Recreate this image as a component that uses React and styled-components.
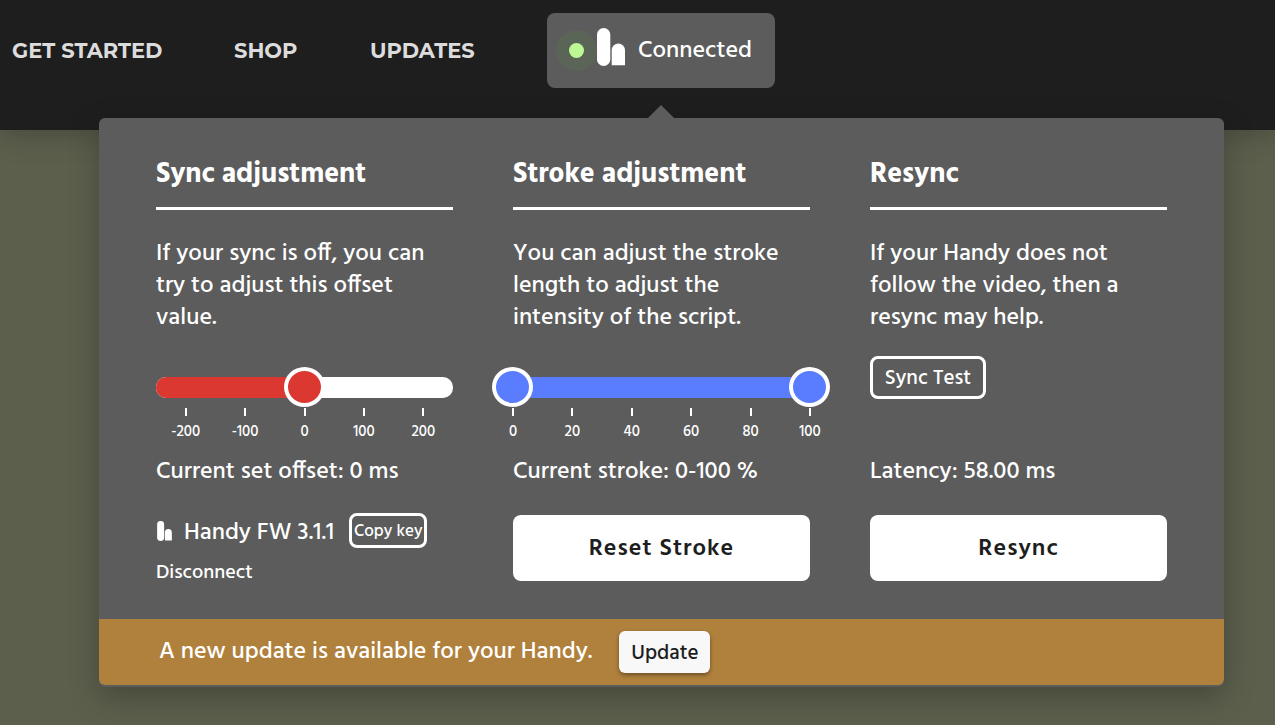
import React, { useState } from "react"
import styled, { createGlobalStyle } from "styled-components"

const Logo = ({ width, height }) => (
    <svg width={width} height={height} viewBox="0 0 28 38" fill="#fff" aria-hidden="true">
        <rect x="0" y="0" width="13.3" height="38" rx="6.6" />
        <path d="M14.7 37.2 V22.2 A6.65 6.8 0 0 1 28 22.2 V37.2 Z" />
    </svg>
)

const Slider = ({ min, max, values, names, color, rail, ticks, wide, onChange }) => {
    const percent = (v) => ((v - min) / (max - min)) * 100
    const from = values.length > 1 ? percent(values[0]) : 0
    const to = percent(values[values.length - 1])
    return (
        <SliderBox>
            <Rail $rail={rail}>
                <Fill $color={color} style={{ marginLeft: `${from}%`, width: `${to - from}%` }} />
            </Rail>
            <Thumbs>
                {values.map((value, i) => (
                    <Range
                        key={names[i]}
                        type="range"
                        aria-label={names[i]}
                        min={min}
                        max={max}
                        value={value}
                        $color={color}
                        onChange={(e) => onChange(i, Number(e.target.value))}
                    />
                ))}
            </Thumbs>
            <Ticks $wide={wide}>
                {ticks.map((tick) => (
                    <Tick key={tick}>{tick}</Tick>
                ))}
            </Ticks>
        </SliderBox>
    )
}

const App = () => {
    const [offset, setOffset] = useState(0)
    const [stroke, setStroke] = useState([0, 100])

    const changeStroke = (i, value) => {
        const next = [...stroke]
        next[i] = value
        if (next[0] <= next[1]) setStroke(next)
    }

    return (
        <>
            <GlobalStyle />
            <Header>
                <Nav>
                    <NavLink href="#start">GET STARTED</NavLink>
                    <NavLink href="#shop">SHOP</NavLink>
                    <NavLink href="#updates">UPDATES</NavLink>
                    <Status>
                        <Halo>
                            <Dot />
                        </Halo>
                        <Logo width={28} height={38} />
                        <StatusText>Connected</StatusText>
                    </Status>
                </Nav>
            </Header>
            <Panel>
                <Arrow />
                <Columns>
                    <Column>
                        <Title>Sync adjustment</Title>
                        <Text>If your sync is off, you can try to adjust this offset value.</Text>
                        <Control>
                            <Slider
                                min={-250}
                                max={250}
                                values={[offset]}
                                names={["Sync offset"]}
                                color="#dc3832"
                                rail="#fff"
                                ticks={[-200, -100, 0, 100, 200]}
                                onChange={(i, value) => setOffset(value)}
                            />
                        </Control>
                        <Current>Current set offset: {offset} ms</Current>
                        <Device>
                            <Logo width={17} height={20} />
                            <DeviceName>Handy FW 3.1.1</DeviceName>
                            <CopyButton>Copy key</CopyButton>
                        </Device>
                        <Disconnect>Disconnect</Disconnect>
                    </Column>
                    <Column>
                        <Title>Stroke adjustment</Title>
                        <Text>You can adjust the stroke length to adjust the intensity of the script.</Text>
                        <Control>
                            <Slider
                                min={0}
                                max={100}
                                values={stroke}
                                names={["Stroke start", "Stroke end"]}
                                color="#5a7dff"
                                rail="#fff"
                                ticks={[0, 20, 40, 60, 80, 100]}
                                wide
                                onChange={changeStroke}
                            />
                        </Control>
                        <Current>Current stroke: {stroke[0]}-{stroke[1]} %</Current>
                        <BigButton onClick={() => setStroke([0, 100])}>Reset Stroke</BigButton>
                    </Column>
                    <Column>
                        <Title>Resync</Title>
                        <Text>If your Handy does not follow the video, then a resync may help.</Text>
                        <Control>
                            <SyncButton>Sync Test</SyncButton>
                        </Control>
                        <Current>Latency: 58.00 ms</Current>
                        <BigButton>Resync</BigButton>
                    </Column>
                </Columns>
                <Notice>
                    <NoticeText>A new update is available for your Handy.</NoticeText>
                    <UpdateButton>Update</UpdateButton>
                </Notice>
            </Panel>
        </>
    )
}
export default App

const GlobalStyle = createGlobalStyle`
    * {
        box-sizing: border-box;
    }
    body {
        margin: 0;
        background: #5c5f4c;
        color: #fff;
        font-family: Hind, "Noto Sans", "Open Sans", sans-serif;
        font-weight: 500;
    }
    button {
        font-family: inherit;
        font-weight: 500;
        cursor: pointer;
    }
    h2, p {
        margin: 0;
    }
`
const Header = styled.header`
    height: 130px;
    padding: 13px 12px;
    background: #1e1e1e;
    box-shadow: 0 0 30px rgba(0, 0, 0, 0.3);
`
const Nav = styled.nav`
    display: grid;
    grid-template-columns: 150px 64px 105px 228px;
    column-gap: 72px;
    align-items: center;
`
const NavLink = styled.a`
    color: #dcdcdc;
    font-family: Montserrat, Inter, sans-serif;
    font-size: 21px;
    font-weight: 700;
    white-space: nowrap;
    text-decoration: none;
`
const Status = styled.button`
    height: 75px;
    padding: 0 0 0 9px;
    display: flex;
    align-items: center;
    border: none;
    border-radius: 8px;
    background: #5c5c5c;
    color: #fff;

    svg {
        margin-bottom: 8px;
    }
`
const Halo = styled.span`
    width: 41px;
    height: 41px;
    display: flex;
    align-items: center;
    justify-content: center;
    border-radius: 50%;
    background: #5a6457;
`
const Dot = styled.span`
    width: 15px;
    height: 15px;
    border-radius: 50%;
    background: #bdf895;
`
const StatusText = styled.span`
    margin-left: 13px;
    font-size: 24px;
`
const Panel = styled.main`
    position: relative;
    margin: -12px 51px 38px 99px;
    padding-bottom: 2px;
    border-radius: 6px;
    background: #5c5c5c;
    box-shadow: 0 10px 30px rgba(0, 0, 0, 0.25);
`
const Arrow = styled.span`
    position: absolute;
    top: -13px;
    left: calc(50% - 14px);
    border: 13px solid transparent;
    border-top: none;
    border-bottom-color: #5c5c5c;
`
const Columns = styled.div`
    display: grid;
    grid-template-columns: repeat(3, 1fr);
    column-gap: 60px;
    padding: 36px 57px 31px;
`
const Column = styled.section`
    min-width: 0;
`
const Title = styled.h2`
    padding-bottom: 11px;
    border-bottom: 3px solid #fff;
    font-size: 28px;
    font-weight: 700;
    line-height: 42px;
`
const Text = styled.p`
    margin-top: 28px;
    padding-right: 20px;
    font-size: 24px;
    line-height: 32px;
`
const Control = styled.div`
    height: 100px;
    margin-top: 22px;
`
const SliderBox = styled.div`
    padding-top: 21px;
`
const Rail = styled.div`
    height: 21px;
    border-radius: 10px;
    background: ${(p) => p.$rail};
    overflow: hidden;
`
const Fill = styled.div`
    height: 21px;
    background: ${(p) => p.$color};
`
const Thumbs = styled.div`
    display: grid;
    margin: -31px -20px 0 -21px;
`
const Range = styled.input`
    grid-area: 1 / 1;
    width: 100%;
    height: 40px;
    margin: 0;
    appearance: none;
    background: transparent;
    pointer-events: none;

    &::-webkit-slider-thumb {
        appearance: none;
        width: 41px;
        height: 40px;
        border: 4px solid #fff;
        border-radius: 50%;
        background: ${(p) => p.$color};
        cursor: pointer;
        pointer-events: auto;
    }
`
const Ticks = styled.div`
    display: flex;
    margin: 0 ${(p) => (p.$wide ? "-10%" : "0")};
    padding-top: 1px;
`
const Tick = styled.span`
    flex: 1;
    display: flex;
    flex-direction: column;
    align-items: center;
    font-size: 15px;
    line-height: 32px;

    &::before {
        content: "";
        width: 2px;
        height: 8px;
        background: #fff;
    }
`
const Current = styled.p`
    font-size: 24px;
    line-height: 32px;
    white-space: nowrap;
`
const Device = styled.div`
    display: flex;
    align-items: center;
    margin-top: 24px;
`
const DeviceName = styled.span`
    margin: 0 15px 0 11px;
    padding-top: 5px;
    font-size: 24px;
    line-height: 32px;
    white-space: nowrap;
`
const OutlineButton = styled.button`
    padding: 2px 0 0;
    border: 3px solid #fff;
    border-radius: 8px;
    background: transparent;
    color: #fff;
    white-space: nowrap;
`
const CopyButton = styled(OutlineButton)`
    width: 78px;
    height: 35px;
    font-size: 17px;
`
const SyncButton = styled(OutlineButton)`
    width: 116px;
    height: 43px;
    font-size: 21px;
`
const Disconnect = styled.button`
    display: block;
    margin-top: 9px;
    padding: 0;
    border: none;
    background: transparent;
    color: #fff;
    font-size: 20px;
    line-height: 30px;
`
const BigButton = styled.button`
    width: 100%;
    height: 66px;
    margin-top: 27px;
    padding: 2px 0 0;
    border: none;
    border-radius: 8px;
    background: #fff;
    color: #1e1e1e;
    font-size: 24px;
    font-weight: 600;
    letter-spacing: 1px;
`
const Notice = styled.div`
    display: flex;
    align-items: center;
    gap: 27px;
    height: 66px;
    padding: 0 60px;
    border-radius: 0 0 6px 6px;
    background: #b0813d;
`
const NoticeText = styled.p`
    font-size: 24px;
    white-space: nowrap;
`
const UpdateButton = styled.button`
    width: 91px;
    height: 42px;
    padding: 2px 0 0;
    border: none;
    border-radius: 6px;
    background: #f8f8f8;
    color: #1e1e1e;
    font-size: 21px;
    box-shadow: 0 2px 4px rgba(0, 0, 0, 0.4);
`
